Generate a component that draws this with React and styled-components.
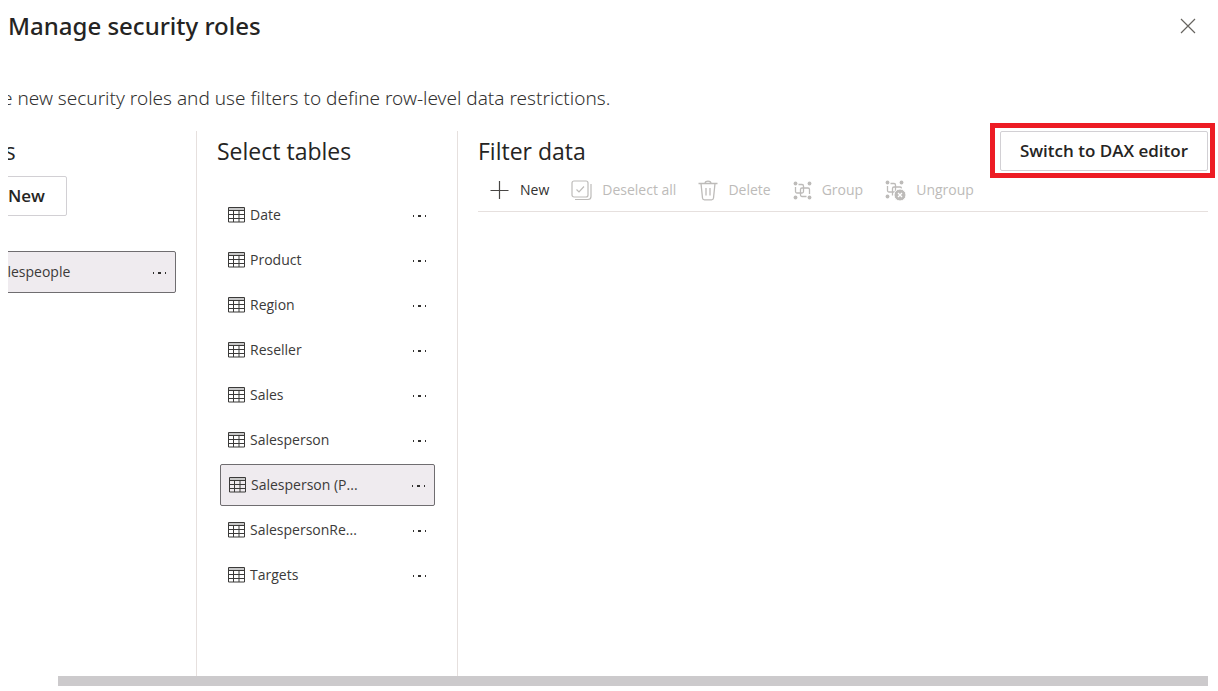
import React from "react";
import styled, { createGlobalStyle } from "styled-components";

const GlobalStyle = createGlobalStyle`
  *, *::before, *::after { box-sizing: border-box; }
  body {
    margin: 0;
    background: #ffffff;
    color: #252423;
    font-family: "Open Sans", "Noto Sans", sans-serif;
  }
  button { font-family: inherit; color: inherit; cursor: pointer; }
  h1, h2, p, ul { margin: 0; padding: 0; }
`;

const Dialog = styled.main`
  display: flex;
  flex-direction: column;
  min-height: 100vh;
  padding: 0 10px 5px 8px;
`;

const Header = styled.header`
  display: flex;
  align-items: center;
  justify-content: space-between;
  height: 52px;
  padding-right: 10px;
`;

const Title = styled.h1`
  font-family: "Noto Sans", sans-serif;
  font-size: 24px;
  line-height: 32px;
  font-weight: 500;
`;

const CloseButton = styled.button`
  display: flex;
  padding: 1px;
  border: 0;
  background: none;
`;

/* Clips only what is scrolled out on the left side. */
const Viewport = styled.div`
  display: flex;
  flex: 1;
  flex-direction: column;
  clip-path: inset(0 -10px 0 0);
`;

const Scrolled = styled.div`
  display: flex;
  flex: 1;
  flex-direction: column;
  margin-left: -52px;
`;

const Description = styled.p`
  padding: 34px 0 21px;
  font-family: "Noto Sans", sans-serif;
  font-size: 19px;
  line-height: 24px;
  font-weight: 300;
  color: #323130;
  white-space: nowrap;
`;

const Panels = styled.div`
  display: flex;
  flex: 1;
`;

const Panel = styled.section`
  flex: ${(p) => (p.$width ? `0 0 ${p.$width}px` : "1")};
  min-width: 0;
  padding: 0 ${(p) => (p.$width ? 20 : 0)}px 0 ${(p) => (p.$first ? 2 : 20)}px;
  border-right: ${(p) => (p.$width ? "1px solid #e6e0de" : "0")};
`;

const PanelTitle = styled.h2`
  font-size: 23px;
  line-height: 40px;
  font-weight: 400;
`;

const PanelHead = styled.div`
  display: flex;
  justify-content: space-between;
`;

const OutlineButton = styled.button`
  display: flex;
  align-items: center;
  justify-content: center;
  gap: 8px;
  height: 40px;
  padding: 0 19px;
  border: 1px solid #d2d0d4;
  border-radius: 2px;
  background: #ffffff;
  font-size: 17px;
  line-height: 24px;
  font-weight: 600;
  white-space: nowrap;
`;

const NewRoleButton = styled(OutlineButton)`
  width: 109px;
  margin-top: 5px;
`;

const Highlight = styled.div`
  position: relative;
  &::after {
    content: "";
    position: absolute;
    inset: -8px -7px -7px -10px;
    border: 5px solid #ed1c24;
    pointer-events: none;
  }
`;

const List = styled.ul`
  display: flex;
  flex-direction: column;
  gap: 3px;
  margin: ${(p) => p.$top}px ${(p) => p.$right || 0}px 0 3px;
  list-style: none;
`;

const Item = styled.li`
  display: flex;
  align-items: center;
  height: 42px;
  padding: 0 8px;
  border: ${(p) => (p.$selected ? "1px solid #6f6d70" : "0")};
  border-radius: 2px;
  background: ${(p) => (p.$selected ? "#efebef" : "transparent")};
`;

const ItemButton = styled.button`
  display: flex;
  flex: 1;
  align-items: center;
  gap: 5px;
  min-width: 0;
  padding: 0;
  border: 0;
  background: none;
  font-size: 14px;
  line-height: 20px;
  color: #3b3a39;
`;

const MoreButton = styled.button`
  display: flex;
  padding: 2px 0 0;
  border: 0;
  background: none;
`;

const Toolbar = styled.div`
  display: flex;
  align-items: center;
  gap: 22px;
  height: 41px;
  padding: 0 0 2px 12px;
  border-bottom: 1px solid #e6e0de;
`;

const ToolButton = styled.button`
  display: flex;
  align-items: center;
  gap: 10px;
  padding: 0;
  border: 0;
  background: none;
  font-size: 14px;
  line-height: 20px;
  color: #323130;
  white-space: nowrap;
  &:disabled { color: #bdbbb9; cursor: default; }
`;

const ScrollThumb = styled.div`
  height: 10px;
  margin-left: 50px;
  background: #cccacc;
`;

const Svg = ({ w = 20, h = w, children }) => (
  <svg width={w} height={h} viewBox={`0 0 ${w} ${h}`} fill="none" stroke="currentColor" aria-hidden="true">
    {children}
  </svg>
);

const CloseIcon = () => (
  <Svg w={18}><path d="M2 2l14 14M16 2L2 16" stroke="#66645f" strokeWidth="1.2" /></Svg>
);

const TableIcon = () => (
  <Svg w={17} h={16}>
    <path d="M1 1h15v3H1z" fill="#c8c8c8" stroke="none" />
    <path d="M.5 .5h16v14.500H.5zM.5 3.5h16M.5 7.5h16M.5 11.5h16M5.5 3.5v11.500M11 3.5v11.500" />
  </Svg>
);

const MoreIcon = () => (
  <Svg w={15} h={4}>
    <path d="M1 1h1v2H1zM6 1h3v2H6zM13 1h1v2h-1z" fill="#323130" stroke="none" />
  </Svg>
);

const PlusIcon = () => (
  <Svg><path d="M9.5 1v18M.5 10.5h18" stroke="#484644" strokeWidth="1.2" /></Svg>
);

const DeselectIcon = () => (
  <Svg w={21}>
    <rect x="1" y="1" width="16" height="16" rx="2" strokeWidth="1.2" />
    <path d="M5.5 9.5l2.5 2.5 5-5.5M20 4v12.5a3 3 0 0 1-3 3H4" strokeWidth="1.2" />
  </Svg>
);

const TrashIcon = () => (
  <Svg w={20} h={21}>
    <path d="M.5 3.5h19M7 3.5C7 .2 13 .2 13 3.5M3 3.5l1.5 14.5a2 2 0 0 0 2 1.8h7a2 2 0 0 0 2-1.8L17 3.5M8 8v7.5M12 8v7.5" strokeWidth="1.3" />
  </Svg>
);

const GroupShapes = () => (
  <>
    <g fill="currentColor" stroke="none">
      <circle cx="2.5" cy="2.5" r="1.9" />
      <circle cx="16.5" cy="2.5" r="1.9" />
      <circle cx="2.5" cy="16.5" r="1.9" />
    </g>
    <path d="M5.500 3.500H9a1.500 1.500 0 0 1 1.500 1.500v5.500A1.500 1.500 0 0 1 9 12H4a1.500 1.500 0 0 1-1.500-1.500V6" strokeWidth="1.3" />
  </>
);

const GroupIcon = () => (
  <Svg w={19}>
    <GroupShapes />
    <circle cx="16.5" cy="16.5" r="1.9" fill="currentColor" stroke="none" />
    <path d="M13.500 15.500H9A1.500 1.500 0 0 1 7.500 14V8.500A1.500 1.500 0 0 1 9 7h6a1.500 1.500 0 0 1 1.500 1.500V13" strokeWidth="1.3" />
  </Svg>
);

const UngroupIcon = () => (
  <Svg w={21}>
    <GroupShapes />
    <path d="M7.500 15.500v-7A1.500 1.500 0 0 1 9 7h6a1.500 1.500 0 0 1 1.500 1.500" strokeWidth="1.3" />
    <circle cx="15" cy="15" r="6" fill="currentColor" stroke="#fff" strokeWidth="1" />
    <path d="M13 13l4 4M17 13l-4 4" stroke="#fff" strokeWidth="1.3" />
  </Svg>
);

const tables = [
  "Date", "Product", "Region", "Reseller", "Sales", "Salesperson",
  "Salesperson (P...", "SalespersonRe...", "Targets",
];

const tools = [
  ["New", PlusIcon],
  ["Deselect all", DeselectIcon],
  ["Delete", TrashIcon],
  ["Group", GroupIcon],
  ["Ungroup", UngroupIcon],
];

function ListItem({ name, selected }) {
  return (
    <Item $selected={selected}>
      <ItemButton aria-pressed={selected}><TableIcon />{name}</ItemButton>
      <MoreButton aria-label={`More options for ${name}`}><MoreIcon /></MoreButton>
    </Item>
  );
}

export default function App() {
  return (
    <>
      <GlobalStyle />
      <Dialog>
        <Header>
          <Title>Manage security roles</Title>
          <CloseButton aria-label="Close"><CloseIcon /></CloseButton>
        </Header>
        <Viewport>
          <Scrolled>
            <Description>
              Create new security roles and use filters to define row-level data restrictions.
            </Description>
            <Panels>
              <Panel $width={241} $first>
                <PanelTitle>Roles</PanelTitle>
                <NewRoleButton><PlusIcon />New</NewRoleButton>
                <List $top={35}>
                  <ListItem name="Salespeople" selected />
                </List>
              </Panel>
              <Panel $width={261}>
                <PanelTitle>Select tables</PanelTitle>
                <List $top={23} $right={2}>
                  {tables.map((name, i) => (
                    <ListItem key={name} name={name} selected={i === 6} />
                  ))}
                </List>
              </Panel>
              <Panel>
                <PanelHead>
                  <PanelTitle>Filter data</PanelTitle>
                  <Highlight><OutlineButton>Switch to DAX editor</OutlineButton></Highlight>
                </PanelHead>
                <Toolbar>
                  {tools.map(([label, Icon], i) => (
                    <ToolButton key={label} disabled={i > 0}><Icon />{label}</ToolButton>
                  ))}
                </Toolbar>
              </Panel>
            </Panels>
          </Scrolled>
          <ScrollThumb />
        </Viewport>
      </Dialog>
    </>
  );
}
